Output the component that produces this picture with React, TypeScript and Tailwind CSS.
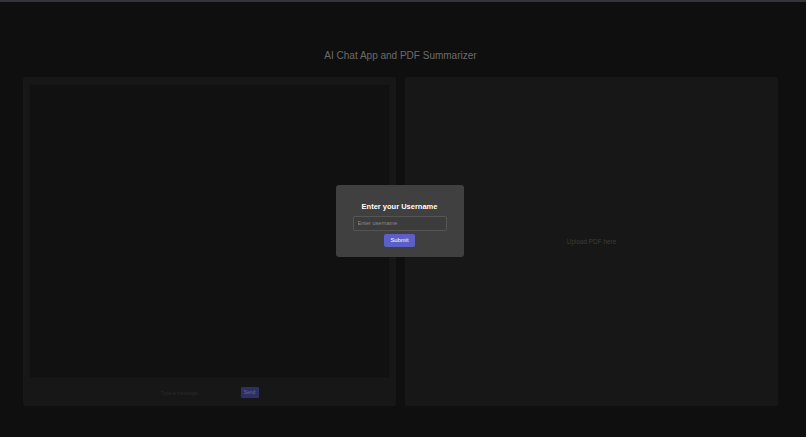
export default function App() {
  return (
    <div
      className="relative h-[437px] w-full overflow-hidden bg-[#1e1e1e] border-t-2 border-[#34343a]"
      style={{ fontFamily: '"Liberation Sans", Arial, sans-serif' }}
    >
      <div className="flex flex-col items-center pt-[48px] pl-[23px] pr-[28px]">
        <h1 className="text-[10px] leading-[12px] text-[#d2d2d2] mb-[15px]">
          AI Chat App and PDF Summarizer
        </h1>

        <div className="grid grid-cols-2 gap-[9px] w-full h-[329px]">
          {/* Chat */}
          <div className="flex flex-col bg-[#2e2e2e] rounded-[2px] px-[6px] pt-[7px]">
            <div className="h-[294px] bg-[#222222] rounded-[2px] border border-[#2a2a2a]" />
            <div className="flex items-center justify-center gap-[4px] pt-[9px]">
              <input
                className="w-[76px] h-[11px] bg-transparent text-[5px] text-[#bbb] placeholder:text-[#555] outline-none"
                placeholder="Type a message..."
              />
              <button className="w-[18px] h-[11px] bg-[#5a5ecf] rounded-[1px] text-[5px] text-[#cfd0f5]">
                Send
              </button>
            </div>
          </div>

          {/* PDF */}
          <div className="flex items-center justify-center bg-[#2e2e2e] rounded-[2px]">
            <span className="text-[6.4px] text-[#767676]">Upload PDF here</span>
          </div>
        </div>
      </div>

      {/* Username modal */}
      <div className="absolute inset-0 bg-black/50 flex items-center justify-center pr-[7px]">
        <div className="w-[128px] h-[72px] bg-[#404040] rounded-[3px] flex flex-col items-center pt-[17px] mt-[2px]">
          <h2 className="text-[7.5px] leading-[9px] font-bold text-white">Enter your Username</h2>
          <input
            className="mt-[5px] w-[94px] h-[15px] px-[4px] bg-[#3c3c3c] border border-[#555] rounded-[2px] text-[5.6px] text-white placeholder:text-[#8a8a8a] outline-none"
            placeholder="Enter username"
          />
          <button className="mt-[3px] w-[31px] h-[13px] bg-[#5b5fc7] rounded-[2px] text-[5.8px] text-white">
            Submit
          </button>
        </div>
      </div>
    </div>
  );
}
